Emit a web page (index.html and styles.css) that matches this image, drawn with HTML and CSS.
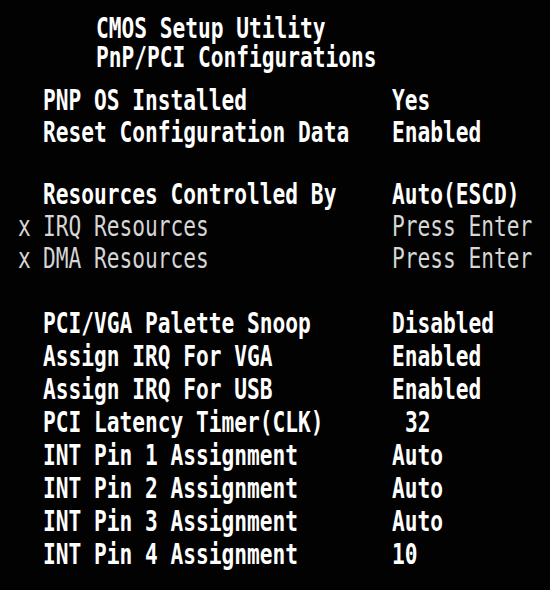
FILE: index.html
```html
<!DOCTYPE html>
<html lang="en">
<head>
<meta charset="utf-8">
<title>CMOS Setup Utility - PnP/PCI Configurations</title>
<link rel="stylesheet" href="styles.css">
</head>
<body>
<main class="screen">
  <header class="title">
    <div class="title-line">CMOS Setup Utility</div>
    <div class="title-line">PnP/PCI Configurations</div>
  </header>

  <section class="group group-first">
    <div class="row"><span class="mark"></span><span class="label">PNP OS Installed</span><span class="value">Yes</span></div>
    <div class="row"><span class="mark"></span><span class="label">Reset Configuration Data</span><span class="value">Enabled</span></div>
  </section>

  <section class="group group-second">
    <div class="row"><span class="mark"></span><span class="label">Resources Controlled By</span><span class="value">Auto(ESCD)</span></div>
    <div class="row row-disabled"><span class="mark">x</span><span class="label">IRQ Resources</span><span class="value">Press Enter</span></div>
    <div class="row row-disabled"><span class="mark">x</span><span class="label">DMA Resources</span><span class="value">Press Enter</span></div>
  </section>

  <section class="group group-third">
    <div class="row"><span class="mark"></span><span class="label">PCI/VGA Palette Snoop</span><span class="value">Disabled</span></div>
    <div class="row"><span class="mark"></span><span class="label">Assign IRQ For VGA</span><span class="value">Enabled</span></div>
    <div class="row"><span class="mark"></span><span class="label">Assign IRQ For USB</span><span class="value">Enabled</span></div>
    <div class="row"><span class="mark"></span><span class="label">PCI Latency Timer(CLK)</span><span class="value value-indent">32</span></div>
    <div class="row"><span class="mark"></span><span class="label">INT Pin 1 Assignment</span><span class="value">Auto</span></div>
    <div class="row"><span class="mark"></span><span class="label">INT Pin 2 Assignment</span><span class="value">Auto</span></div>
    <div class="row"><span class="mark"></span><span class="label">INT Pin 3 Assignment</span><span class="value">Auto</span></div>
    <div class="row"><span class="mark"></span><span class="label">INT Pin 4 Assignment</span><span class="value">10</span></div>
  </section>
</main>
</body>
</html>
```

FILE: styles.css
```css
html, body {
  margin: 0;
  padding: 0;
  background: #000;
}

body {
  width: 550px;
  height: 590px;
  overflow: hidden;
}

.screen {
  box-sizing: border-box;
  width: 550px;
  height: 590px;
  padding: 14px 0 0 18px;
  background: #020202;
  color: #fff;
  font-family: "DejaVu Sans Mono", "Liberation Mono", monospace;
  font-weight: bold;
  font-size: 21.2px;
  white-space: nowrap;
}

.title {
  padding-left: 78px;
}

.title-line {
  height: 29px;
  line-height: 29px;
  transform: scaleY(1.3);
}

.group {
  display: flex;
  flex-direction: column;
}

.group-first {
  margin-top: 13px;
}

.group-second {
  margin-top: 30px;
}

.group-third {
  margin-top: 32px;
}

.row {
  display: grid;
  grid-template-columns: 25px 349px auto;
  height: 32px;
  line-height: 32px;
  transform: scaleY(1.3);
}

.group-third .row {
  height: 33px;
  line-height: 33px;
}

.row-disabled {
  color: #d6d6d6;
  font-weight: normal;
}

.value-indent {
  padding-left: 13px;
}
```
